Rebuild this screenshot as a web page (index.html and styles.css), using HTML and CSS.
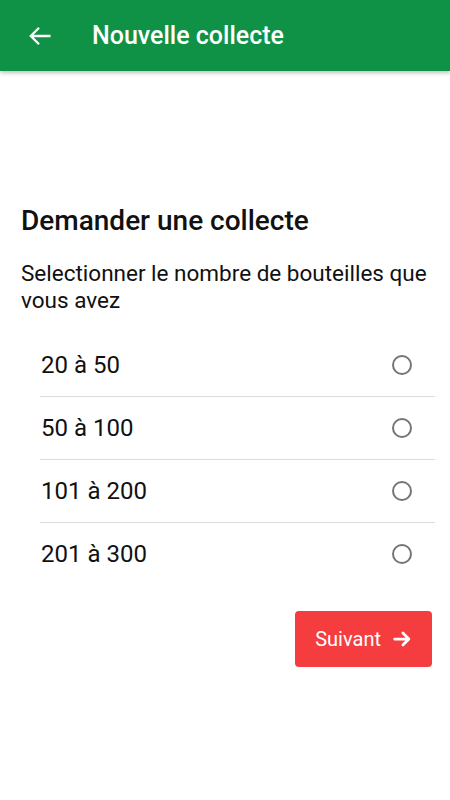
FILE: index.html
```html
<!DOCTYPE html>
<html lang="fr">
<head>
    <meta charset="UTF-8">
    <meta name="viewport" content="width=device-width, initial-scale=1.0">
    <title>Nouvelle collecte</title>
    <link rel="stylesheet" href="styles.css">
</head>
<body>
    <div class="toolbar">
        <button class="back-button" aria-label="Retour">
            <svg width="24" height="24" viewBox="0 0 24 24">
                <path d="M22.5 12H3M11 3.8L2.8 12l8.2 8.2" stroke="#fff" stroke-width="2.3" fill="none"/>
            </svg>
        </button>
        <div class="toolbar-title">Nouvelle collecte</div>
    </div>

    <div class="content">
        <h2>Demander une collecte</h2>
        <p class="subtitle">Selectionner le nombre de bouteilles que vous avez</p>

        <div class="options">
            <label class="option">
                <span>20 à 50</span>
                <input type="radio" name="bottles" value="20-50">
                <span class="radio"></span>
            </label>
            <label class="option">
                <span>50 à 100</span>
                <input type="radio" name="bottles" value="50-100">
                <span class="radio"></span>
            </label>
            <label class="option">
                <span>101 à 200</span>
                <input type="radio" name="bottles" value="101-200">
                <span class="radio"></span>
            </label>
            <label class="option">
                <span>201 à 300</span>
                <input type="radio" name="bottles" value="201-300">
                <span class="radio"></span>
            </label>
        </div>

        <div class="actions">
            <button class="next-button">
                Suivant
                <svg width="22" height="22" viewBox="0 0 24 24">
                    <path d="M4 12h15M13 5.5l6.5 6.5-6.5 6.5" stroke="#fff" stroke-width="3" fill="none" stroke-linecap="round" stroke-linejoin="round"/>
                </svg>
            </button>
        </div>
    </div>
</body>
</html>
```

FILE: styles.css
```css
body {
    font-family: Roboto, "Noto Sans", sans-serif;
    margin: 0;
    padding: 0;
    background-color: #fff;
    color: #111;
}
.toolbar {
    display: flex;
    align-items: center;
    height: 71px;
    background-color: #0f9246;
    box-shadow: 0 2px 4px rgba(0, 0, 0, 0.25);
}
.back-button {
    display: flex;
    align-items: center;
    justify-content: center;
    width: 24px;
    height: 24px;
    margin-left: 28px;
    padding: 0;
    border: none;
    background: none;
}
.toolbar-title {
    margin-left: 40px;
    font-size: 25px;
    font-weight: 500;
    color: #fff;
}
.content {
    padding: 134px 15px 0 21px;
}
h2 {
    margin: 0;
    font-size: 28px;
    font-weight: 500;
    line-height: 32px;
    color: #111;
}
.subtitle {
    margin: 23px 0 20px;
    font-size: 22.5px;
    line-height: 27px;
    color: #111;
}
.options {
    margin-left: 19px;
}
.option {
    display: flex;
    align-items: center;
    justify-content: space-between;
    height: 62px;
    border-bottom: 1px solid #dcdcdc;
    font-size: 24px;
    padding-left: 1px;
    padding-right: 23px;
}
.option:last-child {
    border-bottom: none;
}
.option input {
    display: none;
}
.radio {
    width: 16px;
    height: 16px;
    border: 2px solid #757575;
    border-radius: 50%;
}
.actions {
    display: flex;
    justify-content: flex-end;
    margin-top: 26px;
    padding-right: 3px;
}
.next-button {
    display: flex;
    align-items: center;
    gap: 10px;
    height: 56px;
    padding: 0 19px 0 20px;
    border: none;
    border-radius: 4px;
    background-color: #f53d3f;
    color: #fff;
    font-family: Roboto, sans-serif;
    font-size: 20px;
}
```
